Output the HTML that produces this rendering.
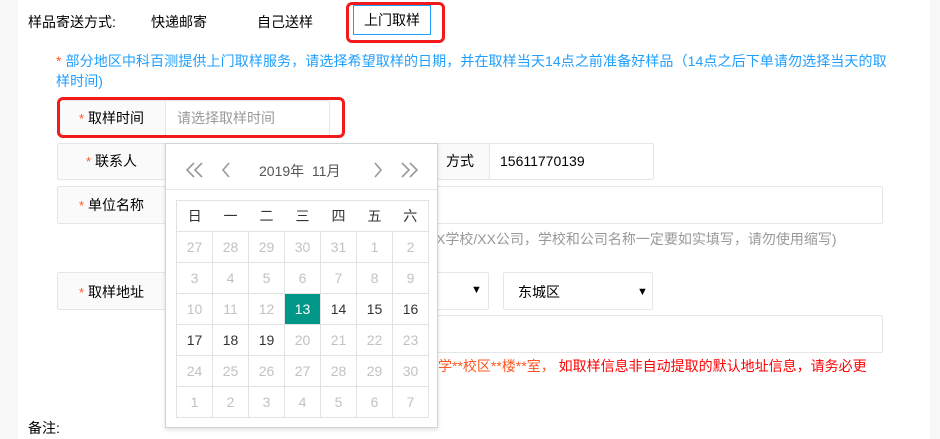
<!DOCTYPE html>
<html><head><meta charset="utf-8"><style>
*{box-sizing:border-box;margin:0;padding:0}
body{width:940px;height:439px;overflow:hidden;background:#fff;font-family:"Liberation Sans","Noto Sans CJK SC",sans-serif;font-size:14px;color:#000;position:relative}
.a{position:absolute;white-space:nowrap}
.lbl{position:absolute;background:#fafafa;border:1px solid #e6e6e6;border-radius:2px;text-align:center;line-height:35px}
.inp{position:absolute;background:#fff;border:1px solid #e6e6e6;border-radius:2px}
.st{color:#FF5722;font-size:13px}
.cal{position:absolute;left:165px;top:143px;width:273px;height:285px;background:#fff;border:1px solid #d2d2d2;box-shadow:0 2px 4px rgba(0,0,0,.12)}
table{position:absolute;left:10px;top:56px;border-collapse:collapse}
td{width:36px;height:31px;border:1px solid #e2e2e2;text-align:center;color:#c2c2c2;font-size:14px;padding:0}
tr.h td{color:#333;border-left:none;border-right:none}
td.n{color:#333}
td.s{background:#009688;color:#fff}
svg{position:absolute}
</style></head><body>
<div class="a" style="left:0;top:0;width:18px;height:439px;background:#f8f8f8"></div>
<div class="a" style="left:930px;top:0;width:10px;height:439px;background:#f8f8f8"></div>

<div class="a" style="left:28px;top:12px">样品寄送方式:</div>
<div class="a" style="left:151px;top:12px">快递邮寄</div>
<div class="a" style="left:257px;top:12px">自己送样</div>
<div class="a" style="left:353px;top:5px;width:78px;height:30px;border:1px solid #1E9FFF;text-align:center;line-height:28px">上门取样</div>
<div class="a" style="left:346px;top:2px;width:99px;height:41px;border:3px solid #f21b1b;border-radius:6px"></div>

<div class="a" style="left:56px;top:51px;color:#1E9FFF;font-size:14px;line-height:20px;white-space:normal;width:836px;letter-spacing:0.1px"><span style="color:#FF5722">*</span> 部分地区中科百测提供上门取样服务，请选择希望取样的日期，并在取样当天14点之前准备好样品（14点之后下单请勿选择当天的取样时间)</div>

<div class="lbl" style="left:57px;top:100px;width:109px;height:36px"><span class="st">*</span> 取样时间</div>
<div class="inp" style="left:165px;top:100px;width:165px;height:36px;color:#999;padding-left:11px;line-height:34px">请选择取样时间</div>
<div class="a" style="left:57px;top:97px;width:288px;height:41px;border:3px solid #f21b1b;border-radius:6px"></div>

<div class="lbl" style="left:57px;top:143px;width:109px;height:37px"><span class="st">*</span> 联系人</div>
<div class="lbl" style="left:400px;top:143px;width:90px;height:37px;padding-left:30px">方式</div>
<div class="inp" style="left:489px;top:143px;width:165px;height:37px;line-height:35px;padding-left:10px">15611770139</div>

<div class="lbl" style="left:57px;top:186px;width:109px;height:38px;line-height:36px"><span class="st">*</span> 单位名称</div>
<div class="inp" style="left:165px;top:186px;width:718px;height:38px"></div>
<div class="a" style="left:436px;top:229px;color:#999;font-size:14px">X学校/XX公司，学校和公司名称一定要如实填写，请勿使用缩写)</div>

<div class="lbl" style="left:57px;top:272px;width:109px;height:38px;line-height:38px"><span class="st">*</span> 取样地址</div>
<div class="inp" style="left:400px;top:272px;width:89px;height:38px"><span class="a" style="left:70px;top:11px;font-size:11px">▼</span></div>
<div class="inp" style="left:503px;top:272px;width:150px;height:38px;line-height:38px;padding-left:14px">东城区<span class="a" style="left:133px;top:0px;font-size:11px;line-height:38px">▼</span></div>
<div class="inp" style="left:400px;top:315px;width:483px;height:38px"></div>
<div class="a" style="left:438px;top:356px;font-size:14px;color:#f00"><span style="color:#FF5722">学**校区**楼**室，</span> 如取样信息非自动提取的默认地址信息，请务必更</div>

<div class="a" style="left:28px;top:418px">备注:</div>

<div class="cal">
<svg style="left:20px;top:18px" width="18" height="16" viewBox="0 0 18 16"><path d="M8 1L1 8L8 15M16 1L9 8L16 15" fill="none" stroke="#999" stroke-width="1.6"/></svg>
<svg style="left:55px;top:18px" width="10" height="16" viewBox="0 0 10 16"><path d="M8 1L2 8L8 15" fill="none" stroke="#999" stroke-width="1.6"/></svg>
<div class="a" style="left:93px;top:17px;color:#555;font-size:14px">2019年&nbsp;&nbsp;11月</div>
<svg style="left:207px;top:18px" width="10" height="16" viewBox="0 0 10 16"><path d="M2 1L8 8L2 15" fill="none" stroke="#999" stroke-width="1.6"/></svg>
<svg style="left:234px;top:18px" width="18" height="16" viewBox="0 0 18 16"><path d="M2 1L9 8L2 15M10 1L17 8L10 15" fill="none" stroke="#999" stroke-width="1.6"/></svg>
<div class="a" style="left:0;top:45px;width:271px;height:1px;background:#e6e6e6"></div>
<table>
<tr class="h"><td style="border-left:1px solid #e2e2e2">日</td><td>一</td><td>二</td><td>三</td><td>四</td><td>五</td><td style="border-right:1px solid #e2e2e2">六</td></tr>
<tr><td>27</td><td>28</td><td>29</td><td>30</td><td>31</td><td>1</td><td>2</td></tr>
<tr><td>3</td><td>4</td><td>5</td><td>6</td><td>7</td><td>8</td><td>9</td></tr>
<tr><td>10</td><td>11</td><td>12</td><td class="s">13</td><td class="n">14</td><td class="n">15</td><td class="n">16</td></tr>
<tr><td class="n">17</td><td class="n">18</td><td class="n">19</td><td>20</td><td>21</td><td>22</td><td>23</td></tr>
<tr><td>24</td><td>25</td><td>26</td><td>27</td><td>28</td><td>29</td><td>30</td></tr>
<tr><td>1</td><td>2</td><td>3</td><td>4</td><td>5</td><td>6</td><td>7</td></tr>
</table>
</div>
</body></html>
